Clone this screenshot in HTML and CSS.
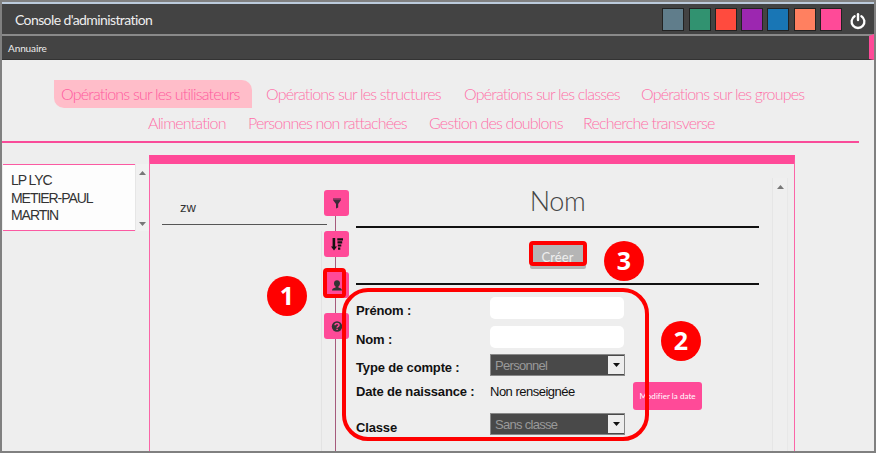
FILE: index.html
```html
<!DOCTYPE html>
<html lang="fr">
<head>
<meta charset="utf-8">
<title>Console d'administration</title>
<link rel="stylesheet" href="styles.css">
</head>
<body>
<div class="window">
  <header class="topbar">
    <h1 class="brand">Console d'administration</h1>
    <div class="themes">
      <i class="swatch slate"></i><i class="swatch green"></i><i class="swatch red"></i><i class="swatch purple"></i><i class="swatch blue"></i><i class="swatch orange"></i><i class="swatch pink"></i>
    </div>
    <svg class="power" viewBox="0 0 16 17"><path d="M4.6 3.2A6.4 6.4 0 1 0 11.4 3.2" fill="none" stroke="#fff" stroke-width="2.3" stroke-linecap="round"/><path d="M8 1.2V7" stroke="#fff" stroke-width="2.4" stroke-linecap="round"/></svg>
  </header>
  <div class="subbar"><span>Annuaire</span></div>
  <nav class="tabs">
    <div class="tab-row first">
      <a class="tab active">Opérations sur les utilisateurs</a><a class="tab t2">Opérations sur les structures</a><a class="tab t3">Opérations sur les classes</a><a class="tab t4">Opérations sur les groupes</a>
    </div>
    <div class="tab-row second">
      <a class="tab t5">Alimentation</a><a class="tab t6">Personnes non rattachées</a><a class="tab t7">Gestion des doublons</a><a class="tab t8">Recherche transverse</a>
    </div>
  </nav>
  <main class="content">
    <aside class="structures">
      <div class="structure-list">LP LYC<br>METIER-PAUL<br>MARTIN</div>
      <div class="scroll"><svg viewBox="0 0 7 4"><path d="M0 4L3.5 0L7 4Z"/></svg><svg viewBox="0 0 7 4"><path d="M0 0L3.5 4L7 0Z"/></svg></div>
    </aside>
    <section class="panel">
      <div class="results">
        <div class="search">zw</div>
        <div class="result-list"></div>
      </div>
      <div class="tools">
        <div class="tool"><svg viewBox="0 0 12 12"><path d="M2 1h8v1.6L7.2 6.6V10L5 11V6.600L2 2.600Z" fill="#3b2a38"/><path d="M2 2.100h8" stroke="#a43a6d" stroke-width=".8"/></svg></div>
        <div class="tool"><svg viewBox="0 0 12 13"><path d="M1.600 0h2.600v8.500H6L3 12.500L0 8.500h1.600Z" fill="#111"/><path d="M6.300 1.300H12M6.500 4.400h4.700M6.800 7.500h3.500M7 10.600h2.300" stroke="#111" stroke-width="2.200"/></svg></div>
        <div class="tool"><svg viewBox="0 0 12 12"><path d="M6 .8c-1.8 0-3 1.3-3 3C3 5.3 3.6 6.5 4.6 7.1v.9C2.4 8.5 1 9.4 1 11h10c0-1.6-1.4-2.5-3.600-3v-.9C8.400 6.500 9 5.300 9 3.800 9 2.100 7.800.8 6 .8Z" fill="#333"/></svg></div>
        <div class="tool"><svg viewBox="0 0 12 12"><circle cx="6" cy="6" r="5.200" fill="#333"/><path d="M4 4.800C4.100 2.300 8.100 2.400 8 4.700C8 6 6.100 5.900 6.100 7.300M6.100 8.300V9.600" fill="none" stroke="#ff4a98" stroke-width="1.500"/></svg></div>
      </div>
      <div class="detail">
        <h2 class="title">Nom</h2>
        <div class="actions"><button class="create">Créer</button></div>
        <form class="form">
          <label class="r1">Prénom :</label><div class="cell"><input class="field" type="text"></div>
          <label class="r2">Nom :</label><div class="cell"><input class="field" type="text"></div>
          <label class="r3">Type de compte :</label><div class="select"><span>Personnel</span><b><svg viewBox="0 0 7 4"><path d="M0 0H7L3.500 4Z"/></svg></b></div>
          <label class="r4">Date de naissance :</label><div class="value"><span>Non renseignée</span><button type="button" class="modify">Modifier la date</button></div>
          <label class="r5">Classe</label><div class="select"><span>Sans classe</span><b><svg viewBox="0 0 7 4"><path d="M0 0H7L3.500 4Z"/></svg></b></div>
        </form>
      </div>
      <div class="scroll detail-scroll"><svg viewBox="0 0 7 4"><path d="M0 4L3.500 0L7 4Z"/></svg></div>
    </section>
  </main>
</div>
<div class="mark mark-user"></div>
<div class="mark mark-create"></div>
<div class="mark mark-form"></div>
<div class="badge one">1</div>
<div class="badge two">2</div>
<div class="badge three">3</div>
</body>
</html>
```
FILE: styles.css
```css
* { box-sizing: border-box; }
body { margin: 0; width: 876px; height: 453px; overflow: hidden; position: relative; background: #eee; font-family: "Liberation Sans", sans-serif; }
.window { width: 876px; height: 453px; border: 2px solid #808080; background: #eee; overflow: hidden; }
.topbar { height: 32px; border-top: 2px solid #bccbdc; background: #434343; display: flex; align-items: center; padding: 0 8px 0 13px; }
.brand { flex: 1; margin: 0; font: 400 14px/30px Lato, sans-serif; color: #eee; letter-spacing: -.6px; padding-top: 2px; }
.themes { display: flex; gap: 4.300px; margin-right: 8px; }
.swatch { width: 22px; height: 23px; border: 1px solid #222; margin-top: 1px; }
.slate { background: #607d8b; } .green { background: #319270; } .red { background: #ff4b3e; } .purple { background: #9c27b0; }
.blue { background: #1976b5; } .orange { background: #ff8060; } .pink { background: #ff4a98; }
.power { width: 16px; height: 17px; margin-top: 4px; }
.subbar { height: 26px; border-top: 2px solid #8a8a8a; border-bottom: 1px solid #333; border-right: 5px solid #ff4a98; background: #434343; color: #eee; font: 400 10px/24px Lato, sans-serif; padding-left: 6px; letter-spacing: -.1px; }
.tabs { height: 83px; width: 857px; padding-top: 20px; border-bottom: 2px solid #f94b99; }
.tab-row { display: flex; height: 28px; }
.tab-row.second { padding-left: 146px; }
.first { padding-left: 52px; }
.tab { font: 300 16px/28px Lato, sans-serif; color: #ff70a8; white-space: nowrap; letter-spacing: -.8px; }
.active { width: 198px; margin-right: 14px; padding-left: 7px; background: #ffbdc9; border-radius: 0 10px 0 10px; color: #ff5a9e; }
.t2 { width: 198px; } .t3 { width: 177px; } .t4 { width: 170px; }
.second .tab { line-height: 30px; }
.t5 { width: 100px; } .t6 { width: 181px; } .t7 { width: 154px; }
.content { display: flex; align-items: flex-start; padding: 12px 0 0 1px; }
.structures { width: 146px; height: 67px; margin-top: 9px; display: flex; }
.structure-list { width: 132px; border: solid #fb5aa2; border-width: 1px 0; background: #fdfdfd; padding: 7px 0 0 8px; font-size: 14px; line-height: 17.600px; color: #333; letter-spacing: -1.050px; }
.scroll { width: 14px; border-left: 1px solid #e6e6e6; display: flex; flex-direction: column; justify-content: space-between; align-items: center; padding: 7px 0 5px; background: #f1f1f1; }
.scroll svg { width: 7px; height: 4px; fill: #777; }
.panel { width: 646px; height: 300px; border: 1px solid #fb65a7; border-top: 9px solid #ff4a98; display: flex; }
.results { width: 174px; padding-left: 12px; }
.search { width: 165px; height: 61px; border-bottom: 1px solid #555; padding: 34px 0 0 18px; font: 13px/20px "Liberation Sans", sans-serif; color: #333; }
.result-list { width: 160px; height: 225px; margin-top: 6px; border-right: 1px solid #e3e3e3; }
.tools { width: 25px; margin: 26px 7px 0 0; display: flex; flex-direction: column; gap: 15px; background: linear-gradient(#a65b7c, #a65b7c) 11px 0 / 1px 100% no-repeat; }
.tool { width: 25px; height: 26px; border-radius: 3px; background: #ff4a98; display: flex; align-items: center; justify-content: center; flex: none; }
.tool svg { width: 12px; height: 13px; }
.detail { width: 403px; }
.title { margin: 0; height: 64px; border-bottom: 2px solid #111; font: 300 27px/73px Lato, sans-serif; color: #444; text-align: center; letter-spacing: -.5px; }
.actions { height: 57px; border-bottom: 2px solid #111; padding-top: 14px; text-align: center; }
.create { width: 56px; height: 27px; border: 0; padding: 2px 0 0; background: #b5b5b5; color: #eee; font: 400 13px/24px Lato, sans-serif; display: block; margin: 0 auto; letter-spacing: .1px; border-radius: 2px; }
.form { display: grid; grid-template-columns: 134px 269px; grid-template-rows: 29px 28px 27px 32px 24px; padding-top: 12px; font-size: 13px; color: #111; }
.form label { font-weight: 700; line-height: 28px; letter-spacing: -.15px; }
.form .r3 { line-height: 28px; } .form .r4 { line-height: 22px; } .form .r5 { line-height: 29px; }
.field { display: block; width: 134px; height: 22px; border: 0; border-radius: 5px; background: #fff; }
.select { width: 135px; height: 22px; border: 1px solid #888; background: #494949; color: #999; display: flex; justify-content: space-between; padding-left: 4px; line-height: 21px; letter-spacing: -.7px; }
.select b { width: 16px; margin: 1px 0; background: #eee; display: flex; align-items: center; justify-content: center; }
.select svg { width: 7px; height: 4px; fill: #111; }
.value { display: flex; line-height: 22px; letter-spacing: -.5px; }
.value > span { width: 143px; }
.modify { width: 69px; height: 28px; margin-top: 1px; border: 0; border-radius: 3px; background: #ff4a98; color: #fff; padding: 0; font: 8px/27px Lato, sans-serif; white-space: nowrap; letter-spacing: .05px; }
.detail-scroll { width: 16px; margin: 14px 0 0 13px; border-right: 1px solid #e8e8e8; background: #efefef; }
.mark { position: absolute; border: 4px solid #f00; }
.mark-user { left: 323px; top: 268px; width: 23px; height: 30px; border-radius: 4px; }
.mark-create { left: 529px; top: 241px; width: 58px; height: 25px; border-radius: 4px; }
.mark-form { left: 342px; top: 288px; width: 307px; height: 153px; border-radius: 26px; }
.badge { position: absolute; width: 40px; height: 40px; border-radius: 50%; background: #f00; color: #fff; font: 700 25px/39px "Open Sans", sans-serif; text-align: center; }
.one { left: 267px; top: 276px; } .two { left: 661px; top: 321px; } .three { left: 604px; top: 241px; }
```
